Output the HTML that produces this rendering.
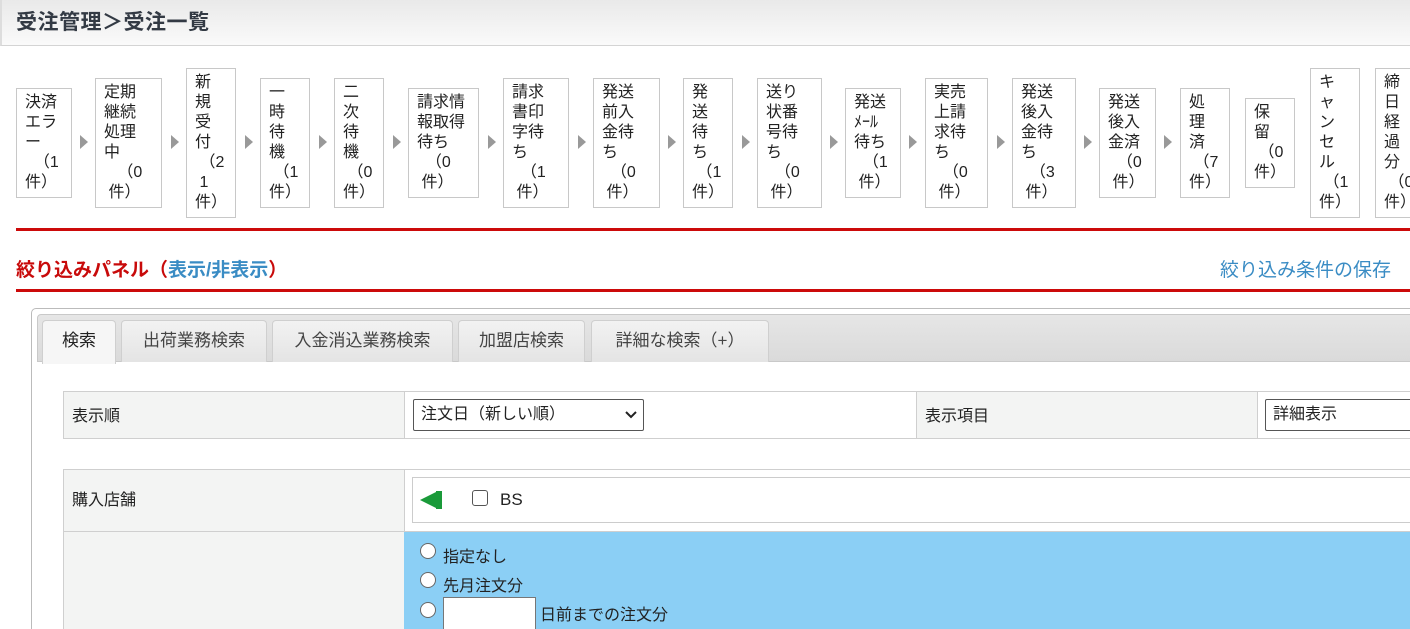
<!DOCTYPE html>
<html><head><meta charset="utf-8"><style>
*{margin:0;padding:0;box-sizing:border-box}
html,body{width:1410px;height:629px;overflow:hidden}
body{background:#fff;font-family:"Liberation Sans","Noto Sans CJK JP",sans-serif;color:#222;position:relative;font-size:16px}
.hd{position:absolute;left:0;top:0;width:1410px;height:46px;background:linear-gradient(#e9e9e9,#fafafa);border-bottom:1px solid #d4d4d4;border-left:2px solid #ddd}
.hd span{position:absolute;left:14px;top:6px;font-size:21px;font-weight:bold;color:#333a44;letter-spacing:0.5px}
.b{position:absolute;border:1px solid #c8c8c8;padding:4px 8px;line-height:20px;font-size:16px;white-space:pre;background:#fff}
.a{position:absolute;top:135px;width:0;height:0;border-top:7px solid transparent;border-bottom:7px solid transparent;border-left:8px solid #999}
.red{position:absolute;left:16px;width:1394px;height:3px;background:#cc0a0a}
.t{position:absolute;font-size:19px;font-weight:bold}
.panel{position:absolute;left:31px;top:308px;width:1400px;height:340px;border:1px solid #bbb;border-radius:5px}
.tabbar{position:absolute;left:37px;top:314px;width:1380px;height:48px;background:linear-gradient(#e6e6e6,#dadada);border:1px solid #c9c9c9;border-radius:4px 0 0 0}
.tab{position:absolute;top:320px;height:42px;background:linear-gradient(#f2f2f2,#e4e4e4);border:1px solid #cfcfcf;border-bottom:none;border-radius:4px 4px 0 0;font-size:17px;color:#444;text-align:center;line-height:40px}
.tab.on{background:#f6f6f6;color:#222;height:44px}
.c{position:absolute;border:1px solid #cfcfcf}
.g{background:#f3f4f3}
.lbl{position:absolute;font-size:16px}
.sel{position:absolute;border:1px solid #555;border-radius:2px;background:#fff;font-size:16px;padding-left:7px;line-height:29px}
.radio{position:absolute;width:16px;height:16px;border:1px solid #666;border-radius:50%;background:#fff}
</style></head><body>
<div class="hd"><span>受注管理＞受注一覧</span></div>

<div class="b" style="left:16px;top:88px;width:56px">決済
エラ
ー
  （1
件）</div>
<div class="a" style="left:80px"></div>
<div class="b" style="left:95px;top:78px;width:67px">定期
継続
処理
中
   （0
 件）</div>
<div class="a" style="left:171px"></div>
<div class="b" style="left:186px;top:68px;width:50px">新
規
受
付
 （2
 1
件）</div>
<div class="a" style="left:245px"></div>
<div class="b" style="left:260px;top:78px;width:50px">一
時
待
機
 （1
件）</div>
<div class="a" style="left:319px"></div>
<div class="b" style="left:334px;top:78px;width:50px">二
次
待
機
 （0
件）</div>
<div class="a" style="left:393px"></div>
<div class="b" style="left:408px;top:88px;width:71px">請求情
報取得
待ち
  （0
 件）</div>
<div class="a" style="left:488px"></div>
<div class="b" style="left:503px;top:78px;width:66px">請求
書印
字待
ち
  （1
 件）</div>
<div class="a" style="left:578px"></div>
<div class="b" style="left:593px;top:78px;width:67px">発送
前入
金待
ち
  （0
 件）</div>
<div class="a" style="left:668px"></div>
<div class="b" style="left:683px;top:78px;width:50px">発
送
待
ち
 （1
件）</div>
<div class="a" style="left:742px"></div>
<div class="b" style="left:757px;top:78px;width:65px">送り
状番
号待
ち
  （0
 件）</div>
<div class="a" style="left:830px"></div>
<div class="b" style="left:845px;top:88px;width:56px">発送
ﾒｰﾙ
待ち
  （1
 件）</div>
<div class="a" style="left:909px"></div>
<div class="b" style="left:925px;top:78px;width:63px">実売
上請
求待
ち
  （0
 件）</div>
<div class="a" style="left:997px"></div>
<div class="b" style="left:1012px;top:78px;width:64px">発送
後入
金待
ち
  （3
 件）</div>
<div class="a" style="left:1084px"></div>
<div class="b" style="left:1099px;top:88px;width:57px">発送
後入
金済
  （0
 件）</div>
<div class="a" style="left:1164px"></div>
<div class="b" style="left:1180px;top:88px;width:50px">処
理
済
 （7
件）</div>
<div class="b" style="left:1245px;top:98px;width:50px">保
留
 （0
件）</div>
<div class="b" style="left:1310px;top:68px;width:50px">キ
ャ
ン
セ
ル
 （1
件）</div>
<div class="b" style="left:1375px;top:68px;width:50px">締
日
経
過
分
 （0
件）</div>

<div class="red" style="top:228px"></div>
<div class="t" style="left:16px;top:255px;color:#c80a0a">絞り込みパネル（<span style="color:#3a8cc4">表示/非表示</span>）</div>
<div class="t" style="left:1220px;top:255px;color:#3a8cc4;font-weight:normal">絞り込み条件の保存</div>
<div class="red" style="top:289px"></div>

<div class="panel"></div>
<div class="tabbar"></div>
<div class="tab on" style="left:42px;width:74px">検索</div>
<div class="tab" style="left:121px;width:146px">出荷業務検索</div>
<div class="tab" style="left:272px;width:181px">入金消込業務検索</div>
<div class="tab" style="left:458px;width:127px">加盟店検索</div>
<div class="tab" style="left:591px;width:178px">詳細な検索（+）</div>

<div class="c g" style="left:63px;top:391px;width:342px;height:48px"></div>
<div class="c" style="left:404px;top:391px;width:513px;height:48px"></div>
<div class="c g" style="left:916px;top:391px;width:342px;height:48px"></div>
<div class="c" style="left:1257px;top:391px;width:200px;height:48px"></div>
<div class="lbl" style="left:72px;top:402px">表示順</div>
<div class="sel" style="left:413px;top:399px;width:231px;height:32px">注文日（新しい順）<svg style="position:absolute;right:6px;top:10px" width="12" height="10"><path d="M1 2 L6 7 L11 2" stroke="#222" stroke-width="2" fill="none"/></svg></div>
<div class="lbl" style="left:925px;top:402px">表示項目</div>
<div class="sel" style="left:1265px;top:399px;width:200px;height:32px">詳細表示</div>

<div class="c g" style="left:63px;top:469px;width:342px;height:63px"></div>
<div class="c" style="left:404px;top:469px;width:1050px;height:63px"></div>
<div class="lbl" style="left:72px;top:486px">購入店舗</div>
<div class="c" style="left:412px;top:477px;width:1040px;height:46px;border-color:#ccc"></div>
<svg style="position:absolute;left:420px;top:490px" width="24" height="20"><polygon points="0,10 18,1 18,19" fill="#1a9a3a"/><rect x="16" y="1" width="6" height="18" fill="#1a9a3a"/></svg>
<div style="position:absolute;left:472px;top:490px;width:16px;height:16px;border:1px solid #555;border-radius:3px;background:#fff"></div>
<div class="lbl" style="left:500px;top:490px;font-size:17px">BS</div>

<div class="c g" style="left:63px;top:531px;width:342px;height:110px"></div>
<div style="position:absolute;left:404px;top:531px;width:1010px;height:110px;background:#8bcff5;border-top:1px solid #cfcfcf"></div>
<div class="radio" style="left:420px;top:543px"></div>
<div class="lbl" style="left:443px;top:543px">指定なし</div>
<div class="radio" style="left:420px;top:572px"></div>
<div class="lbl" style="left:443px;top:572px">先月注文分</div>
<div class="radio" style="left:420px;top:602px"></div>
<div style="position:absolute;left:443px;top:597px;width:93px;height:40px;border:1px solid #777;background:#fff"></div>
<div class="lbl" style="left:540px;top:601px">日前までの注文分</div>
</body></html>
